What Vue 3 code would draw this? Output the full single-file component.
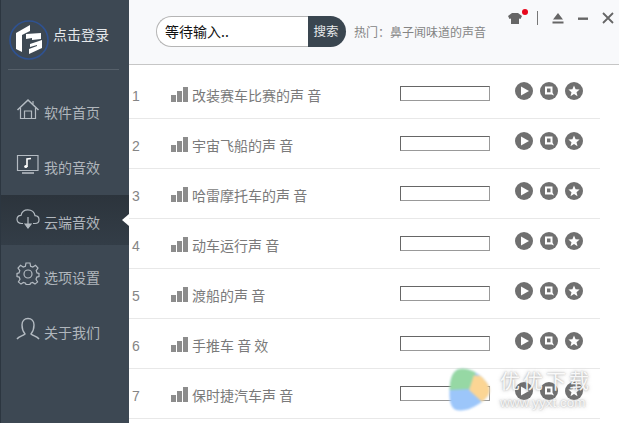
<script setup>
const nav = [
  { label: '软件首页', icon: 'home' },
  { label: '我的音效', icon: 'screen' },
  { label: '云端音效', icon: 'cloud', active: true },
  { label: '选项设置', icon: 'gear' },
  { label: '关于我们', icon: 'user' }
]
const rows = ['改装赛车比赛的声 音', '宇宙飞船的声 音', '哈雷摩托车的声 音', '动车运行声 音', '渡船的声 音', '手推车 音 效', '保时捷汽车声 音']
</script>

<template>
  <div class="app">
    <aside class="side">
      <div class="login">
        <svg class="logo" width="42" height="42" viewBox="0 0 42 42">
          <circle cx="21" cy="21" r="19" fill="none" stroke="#2f5291" stroke-width="1.6" />
          <path d="M8 14 L22 6 V12 L14 16 V33 L8 30 Z" fill="#fff" />
          <path d="M18 15 L33 14 V20 L24 21 V19 L18 20 Z M22 25 L34 21 V29 L21 35 V30 L29 27 V26 L22 28 Z" fill="#fff" />
        </svg>
        <span>点击登录</span>
      </div>
      <nav class="nav">
        <div v-for="n in nav" :key="n.label" class="nav-item" :class="{ active: n.active }">
          <svg width="24" height="24" viewBox="0 0 24 24" fill="none" stroke="#b4bbc2" stroke-width="1.2">
            <template v-if="n.icon === 'home'">
              <path d="M1.5 13 L12 3 L22.5 13" stroke-width="1.6" />
              <path d="M4.5 11 V21.5 H19.5 V11" />
              <path d="M8.5 21.5 V14 H15.5 V21.5" />
              <path d="M17 4 V7" />
            </template>
            <template v-else-if="n.icon === 'screen'">
              <path d="M1.5 3.5 H22 V18.5 H1.5 Z" />
              <path d="M6 21 H18" stroke-width="1.6" />
              <path d="M11 15 V7 L15 6.5" stroke="#fff" stroke-width="1.6" />
              <circle cx="9.8" cy="14.5" r="1.6" fill="#fff" stroke="none" />
            </template>
            <template v-else-if="n.icon === 'cloud'">
              <path d="M7 16.5 H5.5 C2.5 16.5 1 14.5 1 12.3 C1 10 2.7 8.4 5 8.3 C5.8 4.8 8.5 2.8 11.8 2.8 C15.8 2.8 18.5 5.6 19 8.6 C21.5 8.8 23 10.5 23 12.7 C23 14.8 21.4 16.5 19 16.5 H17" />
              <path d="M12 10 V19" />
              <path d="M9 17 L12 21 L15 17 Z" fill="#b4bbc2" />
            </template>
            <template v-else-if="n.icon === 'gear'">
              <path d="M10 1.5 H14 L14.6 4.7 L16.8 5.6 L19.5 3.8 L22 6.6 L20.2 9.2 L21 11.4 L23 12 V15 L20.8 15.6 L20 17.8 L21.6 20.4 L19 22.6 L16.6 21 L14.4 21.8 L14 23 H10 L9.6 21.8 L7.4 21 L5 22.6 L2.4 20.4 L4 17.8 L3.2 15.6 L1 15 V12 L3 11.4 L3.8 9.2 L2 6.6 L4.5 3.8 L7.2 5.6 L9.4 4.7 Z" transform="translate(0 -0.5)" />
              <circle cx="12" cy="12" r="4" />
            </template>
            <template v-else>
              <path d="M1 22 C3 19 7 19 9 17 C6.5 14 6 11 6 8 C6 4 8.5 1.5 12 1.5 C15.5 1.5 18 4 18 8 C18 11 17.5 14 15 17 C17 19 21 19 23 22" stroke-width="1.4" />
            </template>
          </svg>
          <span>{{ n.label }}</span>
        </div>
      </nav>
    </aside>

    <main class="main">
      <header class="head">
        <div class="search">
          <div class="input">等待输入..</div>
          <div class="btn">搜索</div>
        </div>
        <div class="hot">热门：鼻子闻味道的声音</div>
        <div class="win">
          <span class="shirt">
            <svg width="14" height="11" viewBox="0 0 14 11"><path d="M4 0 H10 L14 3 L12.5 6 L11 5.5 V11 H3 V5.5 L1.5 6 L0 3 Z" fill="#666" /></svg>
            <i class="dot"></i>
          </span>
          <i class="sep"></i>
          <svg width="12" height="11" viewBox="0 0 12 11"><path d="M6 0 L11 6.5 H1 Z M0.5 8.5 H11.5 V10.5 H0.5 Z" fill="#666" /></svg>
          <svg width="12" height="11" viewBox="0 0 12 11"><rect x="1" y="4.5" width="10" height="2.4" fill="#666" /></svg>
          <svg width="12" height="12" viewBox="0 0 12 12"><path d="M1 1 L11 11 M11 1 L1 11" stroke="#666" stroke-width="1.8" /></svg>
        </div>
      </header>

      <section class="list">
        <div v-for="(r, i) in rows" :key="r" class="row">
          <span class="num">{{ i + 1 }}</span>
          <span class="bars"><i class="b1"></i><i class="b2"></i><i class="b3"></i></span>
          <span class="name">{{ r }}</span>
          <span class="box"></span>
          <span class="acts">
            <svg width="18" height="18" viewBox="0 0 18 18"><circle cx="9" cy="9" r="9" fill="#707070" /><path d="M6 4.5 L14 9 L6 13.5 Z" fill="#fff" /></svg>
            <svg width="18" height="18" viewBox="0 0 18 18"><circle cx="9" cy="9" r="9" fill="#707070" /><path d="M5 4.5 H12.5 V10.5 L14 13.5 L11.5 12.5 H5 Z" fill="#fff" /><rect x="7" y="6.5" width="3.5" height="3.8" fill="#707070" /></svg>
            <svg width="18" height="18" viewBox="0 0 18 18"><circle cx="9" cy="9" r="9" fill="#707070" /><path d="M9 3.5 L10.6 7.3 L14.6 7.6 L11.5 10.2 L12.5 14.2 L9 12 L5.5 14.2 L6.5 10.2 L3.4 7.6 L7.4 7.3 Z" fill="#fff" /></svg>
          </span>
        </div>
      </section>
    </main>

    <div class="mark">
      <svg class="blob" width="42" height="46" viewBox="0 0 46 50">
        <defs><clipPath id="bc"><path d="M12 2 C22 0 36 8 42 18 C47 26 44 32 36 38 C26 46 14 50 6 46 C0 42 0 30 1 20 C2 10 5 3 12 2 Z" /></clipPath></defs>
        <g clip-path="url(#bc)">
          <rect width="46" height="50" fill="#9cc6fa" />
          <path d="M0 0 H32 L22 24 L0 25 Z" fill="#96d8a4" />
          <path d="M27 9 L50 10 V42 L36 38 L22 25 Z" fill="#fbd594" />
        </g>
      </svg>
      <div class="mark-text">
        <div class="cn">优优下载</div>
        <div class="en">www.yyxt.com</div>
      </div>
    </div>
  </div>
</template>

<style>
html, body { margin: 0; background: #f8f9fb; }
</style>

<style scoped>
.app {
  position: relative;
  display: flex;
  width: 619px;
  height: 423px;
  overflow: hidden;
  background: #fff;
  font-family: "Noto Sans CJK SC", "Liberation Sans", sans-serif;
  border-left: 1px solid #2c3640;
  box-sizing: border-box;
}
.side {
  flex: none;
  width: 128px;
  background: #3d4853;
  color: #c3c8cd;
}
.login {
  display: flex;
  align-items: center;
  gap: 3px;
  height: 70px;
  margin: 0 10px 0 7px;
  box-sizing: border-box;
  border-bottom: 1px solid #56606a;
  color: #e4e7ea;
  font-size: 14px;
}
.login span { margin-top: -2px; }
.logo { margin-top: 10px; }
.nav {
  display: flex;
  flex-direction: column;
  gap: 5px;
  padding-top: 15px;
}
.nav-item {
  position: relative;
  display: flex;
  align-items: center;
  gap: 4px;
  height: 50px;
  padding-left: 15px;
  font-size: 14px;
  color: #b0b6bc;
}
.nav-item span { margin-top: 4px; }
.nav-item svg { margin-top: -2px; }
.nav-item.active {
  background: linear-gradient(#2c343c, #333d47);
}
.nav-item.active::after {
  content: "";
  position: absolute;
  right: 0;
  top: 19px;
  border: 6px solid transparent;
  border-right: 7px solid #fff;
  border-left: 0;
}
.main {
  flex: 1;
  min-width: 0;
  display: flex;
  flex-direction: column;
}
.head {
  position: relative;
  display: flex;
  align-items: center;
  height: 65px;
  flex: none;
  box-sizing: border-box;
  background: #f8f9fb;
  border-bottom: 1px solid #c6c6c6;
  padding: 0 0 4px 27px;
}
.search {
  display: flex;
  height: 31px;
  margin-top: 2px;
}
.input {
  width: 152px;
  box-sizing: border-box;
  border: 1px solid #b5b5b5;
  border-right: 0;
  border-radius: 16px 0 0 16px;
  background: #fff;
  font-size: 14px;
  line-height: 28px;
  padding-left: 8px;
  color: #111;
}
.btn {
  width: 38px;
  background: #3a4650;
  border-radius: 0 16px 16px 0;
  color: #e8eaec;
  font-size: 12.5px;
  line-height: 30px;
  text-align: center;
  padding-right: 2px;
  box-sizing: border-box;
}
.hot {
  margin-left: 8px;
  margin-top: 2px;
  font-size: 12px;
  color: #858585;
}
.win {
  position: absolute;
  top: 11px;
  right: 5px;
  display: flex;
  align-items: center;
}
.shirt { position: relative; display: flex; margin-right: 15px; }
.dot {
  position: absolute;
  right: -6px;
  top: -4px;
  width: 6px;
  height: 6px;
  border-radius: 50%;
  background: #e8071c;
}
.sep { width: 1px; height: 14px; background: #777; margin-right: 14px; }
.win svg + svg { margin-left: 13px; }
.win .sep + svg { margin-left: 0; }
.list {
  padding: 4px 19px 0 0;
  flex: 1;
}
.row {
  display: flex;
  align-items: flex-start;
  height: 50px;
  box-sizing: border-box;
  border-bottom: 1px solid #e8e8e8;
  color: #7a7a7a;
}
.num {
  width: 42px;
  padding-left: 3px;
  box-sizing: border-box;
  font-size: 14px;
  line-height: 20px;
  margin-top: 17px;
  font-family: "Liberation Sans", sans-serif;
  color: #858585;
}
.bars {
  display: flex;
  align-items: flex-end;
  gap: 1.5px;
  width: 21px;
  height: 16px;
  margin-top: 17px;
}
.bars i { width: 4.5px; background: #8c8c8c; display: block; }
.bars .b1 { height: 7px; }
.bars .b2 { height: 11px; }
.bars .b3 { height: 15px; }
.name {
  width: 208px;
  font-size: 14px;
  line-height: 20px;
  margin-top: 16px;
  white-space: nowrap;
}
.box {
  width: 90px;
  height: 15px;
  margin-top: 17px;
  box-sizing: border-box;
  border: 1px solid #666;
  border-right-color: #999;
  border-bottom-color: #999;
  background: #fff;
}
.acts {
  display: flex;
  gap: 7px;
  margin-left: 25px;
  margin-top: 13px;
}
.mark {
  position: absolute;
  left: 448px;
  top: 367px;
  display: flex;
  gap: 9px;
  pointer-events: none;
}
.blob { filter: blur(1px); }
.mark-text { margin-top: 1px; text-shadow: 0 0 2px rgba(110,110,110,.55), 0 0 4px rgba(140,140,140,.45); }
.cn { font-size: 20px; line-height: 26px; letter-spacing: 3px; color: rgba(255,255,255,.92); white-space: nowrap; }
.en { font-size: 13.5px; line-height: 17px; white-space: nowrap; color: rgba(255,255,255,.85); font-family: "Liberation Sans", sans-serif; }
</style>
